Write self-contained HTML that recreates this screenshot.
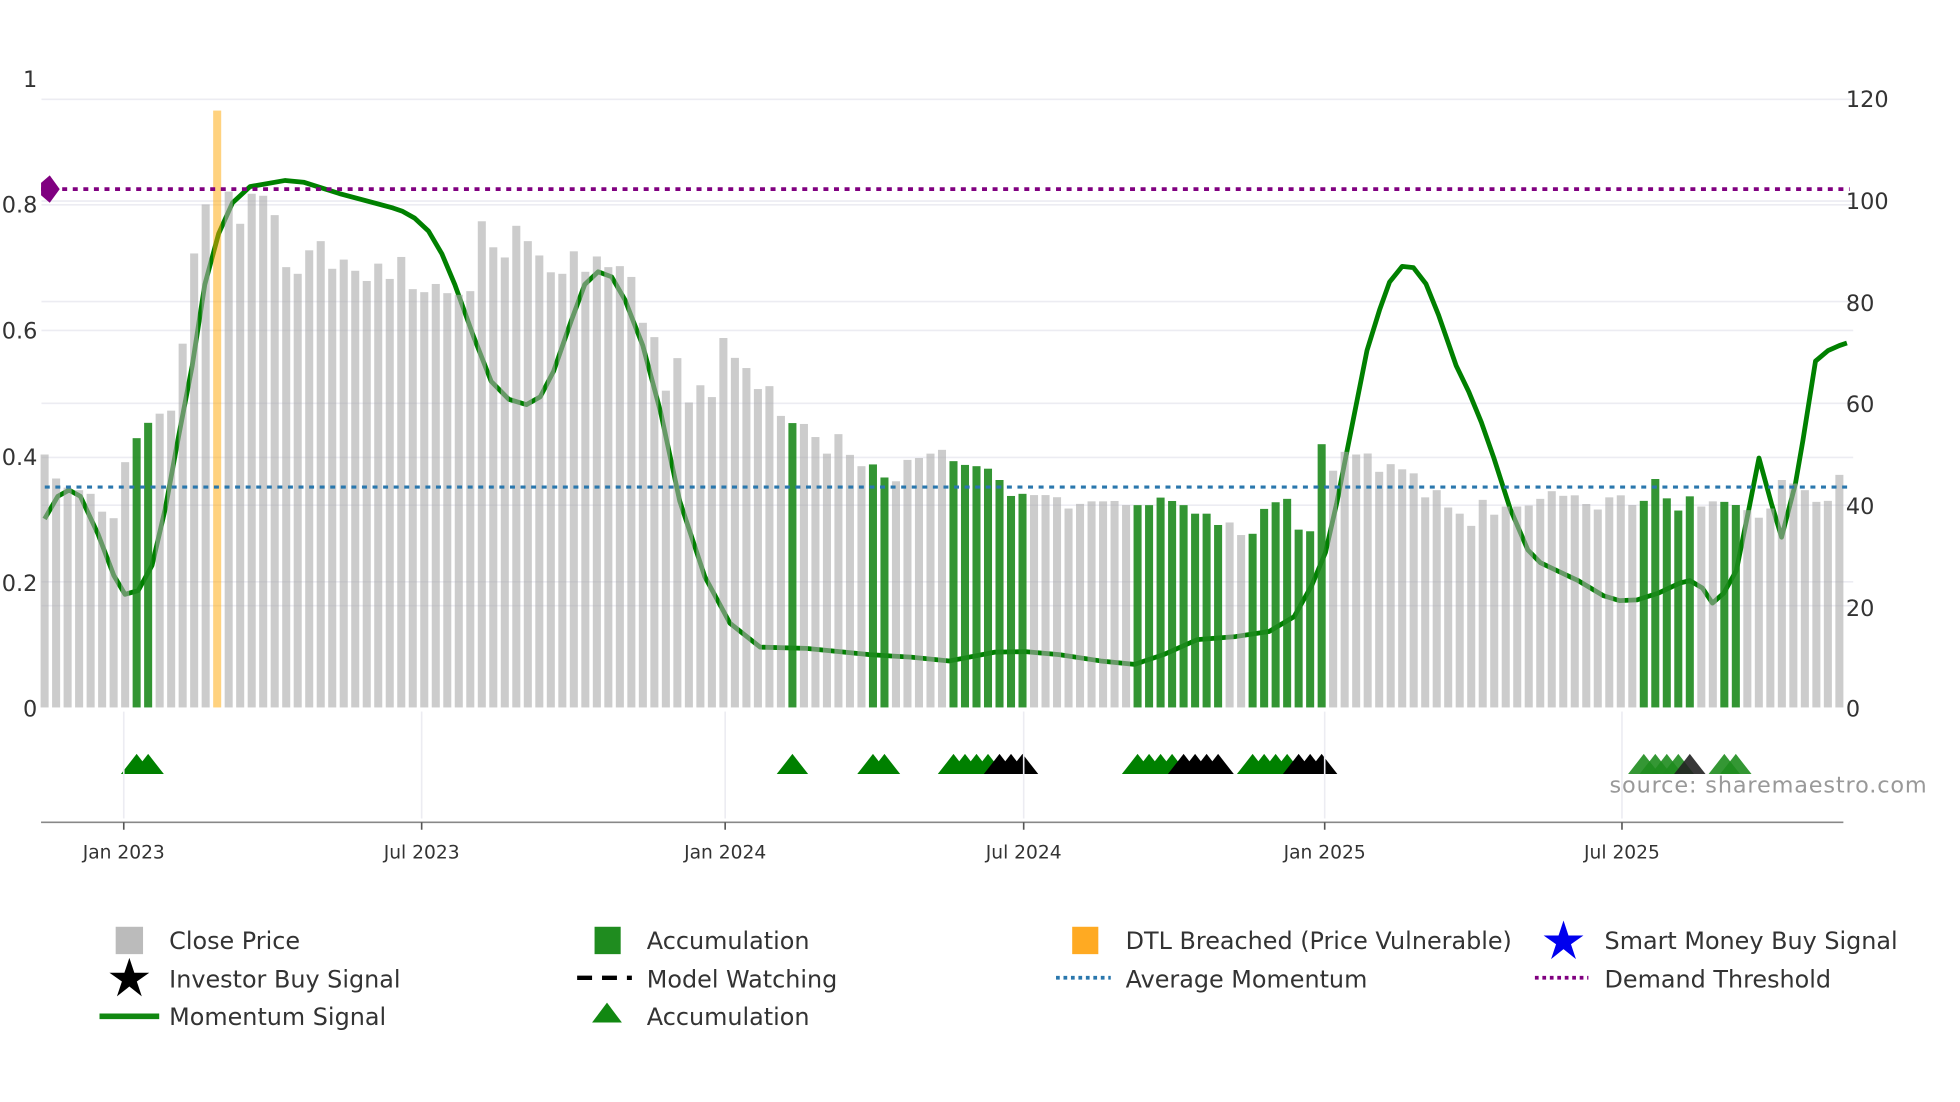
<!DOCTYPE html>
<html><head><meta charset="utf-8">
<style>
html,body{margin:0;padding:0;background:#fff;width:1960px;height:1102px;overflow:hidden}
svg{display:block}
text{font-family:"DejaVu Sans","Liberation Sans",sans-serif}
</style></head>
<body>
<svg id="s" xmlns="http://www.w3.org/2000/svg" width="1960" height="1102" viewBox="0 0 1560 877" preserveAspectRatio="none">
<g stroke="#ececf2" stroke-width="1.3">
<line x1="33" x2="1475" y1="79" y2="79"/><line x1="33" x2="1475" y1="160" y2="160"/>
<line x1="33" x2="1475" y1="240" y2="240"/><line x1="33" x2="1475" y1="321" y2="321"/>
<line x1="33" x2="1475" y1="402" y2="402"/><line x1="33" x2="1475" y1="482" y2="482"/>
<line x1="33" x2="1475" y1="163" y2="163"/><line x1="33" x2="1475" y1="263" y2="263"/>
<line x1="33" x2="1475" y1="364" y2="364"/><line x1="33" x2="1475" y1="463" y2="463"/>
</g>
<polyline fill="none" stroke="#008000" stroke-width="3.8" stroke-linejoin="round" points="35.5,413 46,395 55,390 64,395 78,425 90.6,458 99.5,473 110,470 121,450 131.5,405 142,348 153,291 163,226.5 174,186 185,161.5 199,148.5 227,143.6 241.6,145 270,154 312.7,165.5 320,168 330,173.6 341,183.8 351.7,202 362,226.5 376.6,267 391,303.6 405,317.8 419,322 430,315.8 440.6,295.5 454.8,254.9 465.4,226.4 476,216.3 486.8,220.3 497.4,238.6 511.6,275 525.8,328 541,398.7 561,459 581,496 605,515 641.7,516 692,521 725,523 755.6,526 792,519 816,518.6 843,521 876,526 903,528.7 926,521 953,509 983.4,506.6 1010,502.6 1030,490.8 1044,466 1055,439.6 1064,400 1071,364.5 1088,279 1098,246.7 1106,224.4 1116,212 1125,213 1135,226 1145,250.8 1159,291 1169,311.7 1179,336 1189,364.5 1202,405 1216,437.6 1226,447.8 1239,454 1256,462 1276,474 1289,478 1303,477.4 1320,472 1337,464 1345,462 1355,468 1363,480 1372,472 1382,454 1392,405 1400,364.5 1410,401 1418,427.5 1429,385 1435,350.3 1445,287.4 1455,279 1464,275 1470,273"/>
<g id="bars"></g>
<g id="tris"></g>
<g transform="scale(0.99)">
<g stroke="#ececf2" stroke-width="1.3">
<line x1="99.5" x2="99.5" y1="572" y2="658"/><line x1="339" x2="339" y1="572" y2="658"/>
<line x1="583" x2="583" y1="572" y2="658"/><line x1="823" x2="823" y1="572" y2="658"/>
<line x1="1065" x2="1065" y1="572" y2="658"/><line x1="1304" x2="1304" y1="572" y2="658"/>
</g>
<line x1="33" x2="1487" y1="152" y2="152" stroke="#800080" stroke-width="3" stroke-dasharray="4 4.5"/>
<line x1="36" x2="1487" y1="391.5" y2="391.5" stroke="#2a77ad" stroke-width="2.5" stroke-dasharray="4 4.5"/>
<polygon points="40,141 48,152 40,163 33,157 33,147" fill="#800080"/>
<line x1="33" x2="1482" y1="661" y2="661" stroke="#888" stroke-width="1.3"/>
<g stroke="#555" stroke-width="1.3">
<line x1="99.5" x2="99.5" y1="661" y2="667"/><line x1="339" x2="339" y1="661" y2="667"/>
<line x1="583" x2="583" y1="661" y2="667"/><line x1="823" x2="823" y1="661" y2="667"/>
<line x1="1065" x2="1065" y1="661" y2="667"/><line x1="1304" x2="1304" y1="661" y2="667"/>
</g>
<g fill="#333" font-size="18" text-anchor="end">
<text x="30" y="70">1</text><text x="30" y="171">0.8</text><text x="30" y="272">0.6</text>
<text x="30" y="374">0.4</text><text x="30" y="475">0.2</text><text x="30" y="576">0</text>
</g>
<g fill="#333" font-size="18">
<text x="1484" y="86">120</text><text x="1484" y="168">100</text><text x="1484" y="250">80</text>
<text x="1484" y="331">60</text><text x="1484" y="413">40</text><text x="1484" y="495">20</text><text x="1484" y="576">0</text>
</g>
<g fill="#333" font-size="15" text-anchor="middle">
<text x="99.5" y="690">Jan 2023</text><text x="339" y="690">Jul 2023</text><text x="583" y="690">Jan 2024</text>
<text x="823" y="690">Jul 2024</text><text x="1065" y="690">Jan 2025</text><text x="1304" y="690">Jul 2025</text>
</g>
<text x="1294" y="637" fill="#999" font-size="18" textLength="255">source: sharemaestro.com</text>
<g fill="#333" font-size="19.2">
<rect x="93" y="745" width="22" height="22" fill="#bbb"/>
<text x="136" y="763">Close Price</text>
<rect x="478" y="745" width="21" height="22" fill="#1f8c1f"/>
<text x="520" y="763">Accumulation</text>
<rect x="862" y="745" width="21" height="22" fill="#ffaa22"/>
<text x="905" y="763">DTL Breached (Price Vulnerable)</text>
<polygon fill="#0000ee" points="1257,740 1261,752 1273,752 1263,759 1267,771 1257,763 1247,771 1251,759 1241,752 1253,752"/>
<text x="1290" y="763">Smart Money Buy Signal</text>
<polygon fill="#000" points="104,770 108,782 120,782 110,789 114,801 104,793 94,801 98,789 88,782 100,782"/>
<text x="136" y="794">Investor Buy Signal</text>
<line x1="464" x2="508" y1="786" y2="786" stroke="#000" stroke-width="3.5" stroke-dasharray="12 8"/>
<text x="520" y="794">Model Watching</text>
<line x1="849" x2="893" y1="786" y2="786" stroke="#2a77ad" stroke-width="3" stroke-dasharray="3 3"/>
<text x="905" y="794">Average Momentum</text>
<line x1="1234" x2="1277" y1="786" y2="786" stroke="#800080" stroke-width="3" stroke-dasharray="3 3"/>
<text x="1290" y="794">Demand Threshold</text>
<line x1="80" x2="128" y1="817" y2="817" stroke="#118811" stroke-width="4.5"/>
<text x="136" y="824">Momentum Signal</text>
<polygon fill="#118811" points="488,806 500,822 476,822"/>
<text x="520" y="824">Accumulation</text>
</g>
</g>
</svg>
<script>
var tops=[361.7,380.8,388.1,390.1,393,407.2,412.4,367.8,348.7,336.5,329.2,326.8,273.5,201.7,162.7,88,152.5,178.1,154.2,155.8,171.2,212.6,217.9,199.2,191.9,213.9,206.6,215.5,223.6,209.8,222,204.5,230.1,232.5,226,233.3,234.6,231.7,176.1,196.8,204.9,179.7,191.9,203.3,216.7,217.9,200,216.3,204.1,212.6,211.8,220.4,256.9,268.3,310.9,285,320.3,
306.6,316,269,284.8,292.9,309.6,307.3,331,336.7,337.4,347.8,361,345.5,362,371,369.6,380,383,366,364.5,361,358,367,370,371,373,382,394.7,393,394,394,395.7,404.7,401,399,399,398.7,402,402,402,396,398.7,402,408.8,408.8,417.8,415.8,425.8,424.8,405,399.7,397,421.5,422.8,353.5,374.6,
359.6,361.7,360.9,375.5,369.4,373.5,376.7,395.8,390.1,403.9,408.8,418.5,397.8,409.6,403.1,403.1,402.3,397,390.9,394.6,394.2,401.1,405.5,395.8,394.2,401.9,398.6,381.2,396.6,406.3,395,403.1,399,399.4,401.9,406,412,404.7,382,384.8,390.1,399.4,398.6,377.9];
var greens=[8,9,65,72,73,79,80,81,82,83,84,85,95,96,97,98,99,100,101,102,105,106,107,108,109,110,111,139,140,141,142,143,146,147];
var gT=[8,9,65,72,73,79,80,81,82,95,96,97,98,105,106,107,108,139,140,141,142,146,147];
var bT=[83,84,85,99,100,101,102,109,110,111,143];
var NS="http://www.w3.org/2000/svg";
var B=document.getElementById("bars"),T=document.getElementById("tris");
function X(i){return 35.5+9.157*i;}
for(var i=0;i<tops.length;i++){
 var r=document.createElementNS(NS,"rect");
 r.setAttribute("x",(X(i)-3.2).toFixed(2));r.setAttribute("width","6.4");
 r.setAttribute("y",tops[i]);r.setAttribute("height",(563-tops[i]).toFixed(2));
 var c="#aaaaaa",o="0.6";
 if(greens.indexOf(i)>=0){c="#1d8a1d";o="0.9";}
 if(i==15){c="#ffa500";o="0.5";}
 r.setAttribute("fill",c);r.setAttribute("fill-opacity",o);B.appendChild(r);
}
function tri(i,col,op){var x=X(i),p=document.createElementNS(NS,"polygon");
 p.setAttribute("points",(x-12.5)+",616 "+x+",600 "+(x+12.5)+",616");
 p.setAttribute("fill",col);p.setAttribute("fill-opacity",op);T.appendChild(p);}
gT.forEach(function(i){tri(i,i>130?"#1e8c1e":"#008000",i>130?"0.9":"1");});
bT.forEach(function(i){tri(i,i>130?"#222":"#000",i>130?"0.9":"1");});
</script>
</body></html>
